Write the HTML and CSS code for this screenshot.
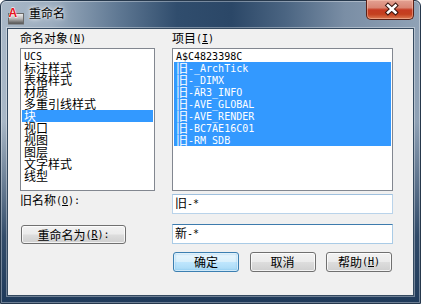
FILE: index.html
```html
<!DOCTYPE html>
<html lang="zh-CN">
<head>
<meta charset="utf-8">
<title>重命名</title>
<link rel="stylesheet" href="styles.css">
</head>
<body>
<div class="window">
  <div class="titlebar">
    <svg class="appicon" width="17" height="18" viewBox="0 0 17 18">
      <defs>
        <linearGradient id="box" x1="0" y1="0" x2="0" y2="1">
          <stop offset="0" stop-color="#f2f2f2"/>
          <stop offset="0.5" stop-color="#b8b8b8"/>
          <stop offset="1" stop-color="#4a4a4a"/>
        </linearGradient>
      </defs>
      <rect x="0.5" y="6.5" width="15" height="10.5" fill="url(#box)" stroke="#6a6a6a" stroke-width="1"/>
      <text x="0.5" y="9.6" font-family="Liberation Sans, sans-serif" font-weight="bold" font-size="12" fill="#e8141c" stroke="#ffffff" stroke-width="0.8" paint-order="stroke">A</text>
    </svg>
    <span class="title">重命名</span>
    <div class="close">
      <svg width="48" height="20" viewBox="0 0 48 20">
        <path d="M22 6.5 L29.5 13.5 M29.5 6.5 L22 13.5" stroke="#3a1610" stroke-width="4.6" stroke-linecap="square" fill="none"/>
        <path d="M22 6.5 L29.5 13.5 M29.5 6.5 L22 13.5" stroke="#ffffff" stroke-width="2.6" stroke-linecap="square" fill="none"/>
      </svg>
    </div>
  </div>
  <div class="client">
    <div class="grid">
      <div class="label">命名对象<span class="m">(<u>N</u>)</span></div>
      <div class="label">项目<span class="m">(<u>I</u>)</span></div>

      <div class="list">
        <div class="item"><span class="m">UCS</span></div>
        <div class="item">标注样式</div>
        <div class="item">表格样式</div>
        <div class="item">材质</div>
        <div class="item">多重引线样式</div>
        <div class="item sel">块</div>
        <div class="item">视口</div>
        <div class="item">视图</div>
        <div class="item">图层</div>
        <div class="item">文字样式</div>
        <div class="item">线型</div>
      </div>
      <div class="list">
        <div class="item"><span class="m">A$C4823398C</span></div>
        <div class="item sel">旧<span class="m">-_ArchTick</span></div>
        <div class="item sel">旧<span class="m">-_DIMX</span></div>
        <div class="item sel">旧<span class="m">-AR3_INFO</span></div>
        <div class="item sel">旧<span class="m">-AVE_GLOBAL</span></div>
        <div class="item sel">旧<span class="m">-AVE_RENDER</span></div>
        <div class="item sel">旧<span class="m">-BC7AE16C01</span></div>
        <div class="item sel">旧<span class="m">-RM_SDB</span></div>
      </div>

      <div class="label2">旧名称<span class="m">(<u>O</u>):</span></div>
      <div class="input inp-old">旧<span class="m">-*</span></div>

      <div class="btncell"><div class="btn wide">重命名为<span class="m">(<u>R</u>):</span></div></div>
      <div class="input inp-new">新<span class="m">-*</span></div>

      <div class="empty"></div>
      <div class="btnrow">
        <div class="btn def">确定</div>
        <div class="btn">取消</div>
        <div class="btn">帮助<span class="m">(<u>H</u>)</span></div>
      </div>
    </div>
  </div>
</div>
</body>
</html>
```

FILE: styles.css
```css
* { box-sizing: border-box; }
html, body { margin: 0; padding: 0; }
body {
  width: 421px;
  height: 304px;
  overflow: hidden;
  font-family: "Noto Sans CJK SC", sans-serif;
  font-size: 12px;
  color: #000;
  background: #ffffff;
}

.window {
  width: 421px;
  height: 304px;
  border: 1px solid #26384c;
  border-radius: 6px 6px 0 0;
  background:
    linear-gradient(180deg, rgba(31,58,90,0) 0%, rgba(31,58,90,0) 40%, rgba(31,58,90,0.85) 78%, #1f3a5a 100%),
    linear-gradient(90deg, #a9b8c7 0%, #9cadbf 12%, #5f7893 28%, #304d6d 42%, #2b4767 55%, #4b6582 68%, #7a8ea5 82%, #90a2b6 100%);
  box-shadow: inset 0 0 0 1px rgba(255,255,255,0.35);
  display: flex;
  flex-direction: column;
  padding: 0 6px 7px 6px;
}

.titlebar {
  height: 27px;
  flex: none;
  display: flex;
  align-items: flex-start;
  padding-left: 1px;
}
.appicon { margin-top: 6px; flex: none; }
.title {
  margin-left: 4px;
  margin-top: 4px;
  line-height: 16px;
  font-size: 12px;
  color: #000;
  text-shadow: 0 0 6px rgba(255,255,255,0.95), 0 0 3px rgba(255,255,255,0.9);
}
.close {
  margin-left: auto;
  margin-top: -1px;
  width: 48px;
  height: 20px;
  border: 1px solid #5a2016;
  border-top: none;
  border-radius: 0 0 5px 5px;
  background: linear-gradient(180deg, #e3a193 0%, #d98674 40%, #c63b22 52%, #c4401f 75%, #dc7a52 100%);
  box-shadow: inset 0 0 0 1px rgba(255,210,190,0.45);
}
.close svg { display: block; margin: -1px 0 0 -1px; }

.client {
  flex: 1;
  background: #f0f0f0;
  border: 1px solid #34495f;
  box-shadow: 0 0 0 1px rgba(255,255,255,0.35);
  padding: 0 0 0 12px;
}

.grid {
  display: grid;
  grid-template-columns: 135px 221px;
  column-gap: 17px;
  align-items: start;
}

.label {
  height: 19px;
  padding-top: 1px;
  line-height: 16px;
  white-space: nowrap;
}

.m {
  font-family: "DejaVu Sans Mono", monospace;
  font-size: 10px;
  vertical-align: 1px;
}

.list {
  height: 143px;
  background: #ffffff;
  border: 1px solid #828790;
  padding: 1px;
  overflow: hidden;
}
.item {
  height: 12px;
  line-height: 12px;
  padding-left: 2px;
  white-space: nowrap;
}
.item.sel {
  background: #3399ff;
  color: #ffffff;
}

.label2 {
  margin-top: 1px;
  line-height: 16px;
  white-space: nowrap;
}

.input {
  height: 20px;
  background: #ffffff;
  padding: 1px 0 0 2px;
  line-height: 14px;
  white-space: nowrap;
}
.inp-old {
  margin-top: 3px;
  border: 1px solid #b9d3ea;
  border-top-color: #9fc0de;
}
.inp-new {
  margin-top: 10px;
  border: 1px solid #a9cbe6;
  border-top-color: #3d7bad;
}

.btncell { margin-top: 11px; padding-left: 1px; }

.btn {
  height: 20px;
  width: 66px;
  border: 1px solid #707070;
  border-radius: 3px;
  background: linear-gradient(180deg, #f2f2f2 0%, #ebebeb 48%, #dddddd 52%, #cfcfcf 100%);
  box-shadow: inset 0 0 0 1px rgba(255,255,255,0.75);
  display: flex;
  align-items: center;
  justify-content: center;
  line-height: 14px;
  white-space: nowrap;
}
.btn.wide {
  width: 105px;
  height: 19px;
}
.btn.def {
  border-color: #3c7fb1;
  background: linear-gradient(180deg, #eaf6fd 0%, #d9f0fc 48%, #bee6fd 52%, #a7d9f5 100%);
  box-shadow: inset 0 0 0 1px rgba(255,255,255,0.6), inset 0 0 2px 1px rgba(98,180,230,0.6);
}

.btnrow {
  margin-top: 8px;
  padding: 0 1px;
  display: flex;
  justify-content: space-between;
}
```
